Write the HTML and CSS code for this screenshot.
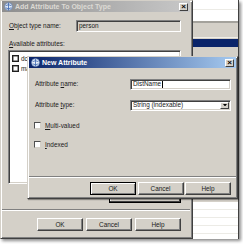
FILE: index.html
```html
<!DOCTYPE html>
<html>
<head>
<meta charset="utf-8">
<link rel="stylesheet" href="styles.css">
</head>
<body>
<div class="scene">
  <div class="desk">
    <div class="dlg outer">
      <div class="title inactive">
        <svg class="ico" viewBox="0 0 10 10"><circle cx="5" cy="5" r="4.3" fill="#dfe8f4" stroke="#5a78a8" stroke-width="0.8"/><path d="M2 4 Q5 2 8 4 M2 6.5 Q5 8.5 8 6.5 M5 1 V9" stroke="#3a66b0" stroke-width="0.9" fill="none"/></svg>
        <span class="ttext">Add Attribute To Object Type</span>
        <span class="close">×</span>
      </div>
      <div class="obody">
        <div class="frow pad">
          <span class="lbl wide1"><u>O</u>bject type name:</span>
          <div class="field disabled w1">person</div>
        </div>
        <div class="lbl pad avail"><u>A</u>vailable attributes:</div>
        <div class="listbox pad">
          <div class="item"><span class="cb dark"></span><span>dc</span></div>
          <div class="item"><span class="cb dark"></span><span>mail</span></div>
        </div>
        <div class="hidbtn">Remove</div>
        <div class="sep"></div>
        <div class="btns outerbtns">
          <div class="btn">OK</div>
          <div class="btn">Cancel</div>
          <div class="btn">Help</div>
        </div>
      </div>
    </div>
    <div class="bgwin">
      <div class="r white h10 line"></div>
      <div class="r white h11"></div>
      <div class="r gline"></div>
      <div class="r gray h14"></div>
      <div class="r lline"></div>
      <div class="r gray h1"></div>
      <div class="r blue"></div>
      <div class="r gray fill"></div>
      <div class="r white h8 line"></div>
      <div class="r white h8 line"></div>
      <div class="r white h8 line"></div>
      <div class="r white h8 line"></div>
      <div class="r white h5"></div>
    </div>
  </div>

  <div class="dlg inner">
    <div class="title active">
      <svg class="ico" viewBox="0 0 10 10"><circle cx="5" cy="5" r="4.3" fill="#e8eef8" stroke="#7f9cc8" stroke-width="0.8"/><path d="M2 4 Q5 2 8 4 M2 6.5 Q5 8.5 8 6.5 M5 1 V9" stroke="#3a66b0" stroke-width="0.9" fill="none"/></svg>
      <span class="ttext">New Attribute</span>
      <span class="close">×</span>
    </div>
    <div class="ibody">
      <div class="frow ipad first">
        <span class="lbl wide2">Attribute <u>n</u>ame:</span>
        <div class="field w2">DistName<span class="caret"></span></div>
      </div>
      <div class="frow ipad second">
        <span class="lbl wide2">Attribute <u>t</u>ype:</span>
        <div class="field w2 select"><span class="seltext">String (indexable)</span><span class="arrow"><svg viewBox="0 0 5 3" class="tri"><path d="M0 0H5L2.5 3Z" fill="#000"/></svg></span></div>
      </div>
      <div class="crow ipad c1"><span class="cb"></span><span><u>M</u>ulti-valued</span></div>
      <div class="crow ipad c2"><span class="cb"></span><span><u>I</u>ndexed</span></div>
      <div class="sep isep"></div>
      <div class="btns innerbtns">
        <div class="btn def">OK</div>
        <div class="btn">Cancel</div>
        <div class="btn">Help</div>
      </div>
    </div>
  </div>
</div>
</body>
</html>
```
FILE: styles.css
```css
* { box-sizing: border-box; margin: 0; padding: 0; }
body {
  width: 243px; height: 244px; overflow: hidden;
  background: #fff;
  font-family: "Liberation Sans", Arial, sans-serif;
  font-size: 6.4px; color: #1a1a1a;
}
u { text-decoration: underline; text-underline-offset: 1px; text-decoration-thickness: 0.5px; }
.scene { position: relative; width: 243px; height: 244px; }
.desk {
  display: flex; width: 239px; height: 239px;
  box-shadow: 2px 2px 3px rgba(0,0,0,0.45);
}
.dlg {
  background: #d4d0c8;
  border: 1px solid; border-color: #d4d0c8 #404040 #404040 #d4d0c8;
  box-shadow: inset 1px 1px 0 #fff, inset -1px -1px 0 #808080;
  display: flex; flex-direction: column;
}
.outer { width: 193px; height: 239px; padding: 0 2px 1px 1px; flex: none; }
.title {
  height: 11px; display: flex; align-items: center; gap: 2px;
  padding: 0 2px 0 2px; flex: none;
}
.title.inactive { background: linear-gradient(to right, #8e8e8e, #c8c8c8); color: #dcdad4; }
.title.active { background: linear-gradient(to right, #0a246a, #a6caf0); color: #fff; }
.ico { width: 9px; height: 9px; flex: none; }
.ttext { font-weight: bold; font-size: 7px; flex: 1; white-space: nowrap; line-height: 11px; }
.close {
  width: 9px; height: 8px; flex: none;
  background: #d4d0c8; color: #000;
  border: 1px solid; border-color: #fff #404040 #404040 #fff;
  font-size: 8px; line-height: 5px; text-align: center; font-weight: bold;
}
.obody { display: flex; flex-direction: column; padding-top: 8px; flex: 1; }
.pad { margin-left: 6px; margin-right: 9px; }
.frow { display: flex; align-items: center; height: 12px; }
.lbl { white-space: nowrap; line-height: 8px; }
.wide1 { width: 68px; padding-left: 1px; }
.field {
  height: 12px; background: #fff;
  border: 1px solid; border-color: #808080 #fff #fff #808080;
  box-shadow: inset 1px 1px 0 #404040, inset -1px -1px 0 #d4d0c8;
  padding: 0 2px; line-height: 10px; white-space: nowrap; display: flex; align-items: center;
}
.field.disabled { background: #d4d0c8; }
.w1 { width: 105px; }
.avail { margin-top: 8px; padding-left: 1px; }
.listbox {
  margin-top: 2px; height: 134px; background: #fff;
  border: 1px solid; border-color: #808080 #fff #fff #808080;
  box-shadow: inset 1px 1px 0 #404040, inset -1px -1px 0 #d4d0c8;
  padding: 2px 2px;
}
.item { display: flex; align-items: center; gap: 2px; height: 10px; padding-left: 1px; }
.cb {
  width: 7px; height: 7px; background: #fff; flex: none;
  border: 1px solid; border-color: #505050 #d4d0c8 #d4d0c8 #505050;
}
.cb.dark { border-color: #202020; border-width: 1px; box-shadow: inset 0 0 0 0.5px #404040; }
.hidbtn {
  align-self: flex-end; margin-right: 9px; margin-top: 5px;
  width: 72px; height: 14px;
  border: 1px solid #000; box-shadow: inset -1px -1px 0 #404040, inset 1px 1px 0 #fff;
  text-align: center; line-height: 12px; color: #000;
}
.sep { height: 2px; border-top: 1px solid #808080; border-bottom: 1px solid #fff; margin-top: 6px; }
.btns { display: flex; justify-content: flex-end; }
.outerbtns { gap: 3px; margin-top: 7px; margin-right: 9px; }
.btn {
  width: 46px; height: 13px; text-align: center; line-height: 11px;
  border: 1px solid; border-color: #fff #404040 #404040 #fff;
  box-shadow: inset -1px -1px 0 #808080;
  background: #d4d0c8;
}
.btn.def { border-color: #000; box-shadow: inset 1px 1px 0 #fff, inset -1px -1px 0 #808080; }

.bgwin { width: 46px; height: 239px; display: flex; flex-direction: column; border-right: 1px solid #404040; background: #d4d0c8; }
.r { flex: none; }
.white { background: #fff; }
.gray { background: #d4d0c8; }
.h10 { height: 10px; } .h11 { height: 11px; } .h14 { height: 14px; } .h8 { height: 8px; } .h5 { height: 5px; } .h1 { height: 1px; }
.line { border-bottom: 1px solid #ecebe6; }
.gline { height: 2px; background: #a4a29c; }
.lline { height: 1px; background: #f0eee8; }
.blue { height: 8px; background: #0a246a; }
.fill { flex: 1; }

.inner {
  position: absolute; left: 27px; top: 56px; width: 211px; height: 143px;
  padding: 0 1px 1px 1px;
  box-shadow: inset 1px 1px 0 #fff, inset -1px -1px 0 #808080, 1px 1px 1px rgba(0,0,0,0.35);
}
.ibody { display: flex; flex-direction: column; padding-top: 10px; }
.ipad { margin-left: 6px; margin-right: 5px; }
.wide2 { width: 95px; }
.w2 { width: 101px; height: 11px; }
.caret { display: inline-block; width: 0.6px; height: 7px; background: #000; margin-left: 0.5px; }
.second { margin-top: 9px; }
.select { justify-content: space-between; padding-right: 1px; }
.arrow {
  width: 9px; height: 7px; background: #d4d0c8; display: flex; align-items: center; justify-content: center;
  border: 1px solid; border-color: #fff #404040 #404040 #fff;
}
.tri { width: 4px; height: 2.5px; }
.crow { display: flex; align-items: center; gap: 4px; height: 7px; margin-left: 5px; }
.c1 { margin-top: 11px; }
.c2 { margin-top: 12px; }
.isep { margin-top: 28px; }
.innerbtns { gap: 1.5px; margin-top: 4px; margin-right: 5px; }
```
